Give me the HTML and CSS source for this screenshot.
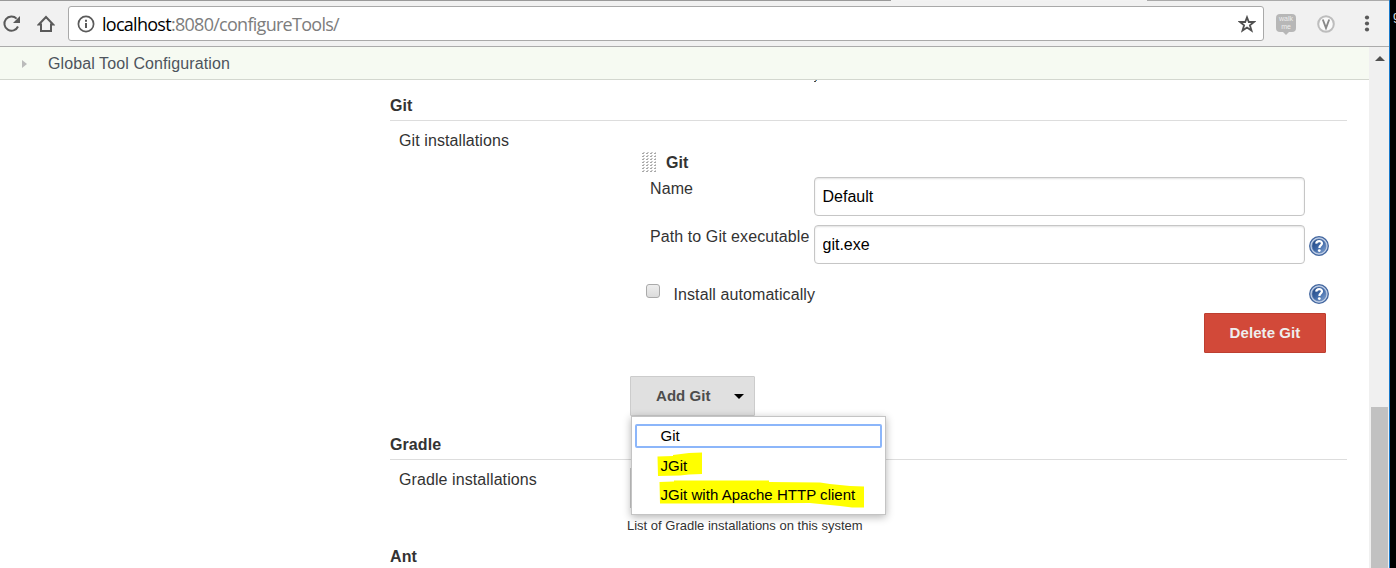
FILE: index.html
```html
<!DOCTYPE html>
<html lang="en">
<head>
<meta charset="utf-8">
<title>Global Tool Configuration</title>
<link rel="stylesheet" href="styles.css">
</head>
<body>
<div class="screen">
  <div class="window">
    <div class="tabstrip"><span class="tab-edge left"></span><span class="tab-edge right"></span></div>
    <header class="toolbar">
      <svg class="reload" width="20" height="20" viewBox="0 0 20 20"><path d="M15.600 4.600A7.100 7.100 0 1 0 17 12.500" fill="none" stroke="#5a5a5a" stroke-width="2"/><path d="M19 2v7h-7z" fill="#5a5a5a"/></svg>
      <svg class="home" width="18" height="18" viewBox="0 0 18 18"><path d="M1.800 9.500 9 2l7.200 7.500H14V16H4V9.500z" fill="none" stroke="#5a5a5a" stroke-width="2"/></svg>
      <div class="address">
        <svg class="info" width="18" height="18" viewBox="0 0 18 18"><circle cx="9" cy="9" r="7.600" fill="none" stroke="#5a5a5a" stroke-width="1.700"/><path d="M9 8v5M9 4.800v2" stroke="#5a5a5a" stroke-width="2"/></svg>
        <span class="url"><b>localhost</b>:8080/configureTools/</span>
        <svg class="star" width="18" height="18" viewBox="0 0 18 18"><path d="M9 2.300l1.800 4.700h5.200l-4.100 3.300 1.600 5.200L9 12.500l-4.500 3 1.600-5.200L2 7h5.200z" fill="none" stroke="#505050" stroke-width="1.800"/></svg>
      </div>
      <div class="walkme"><span>walk</span><span>me</span></div>
      <svg class="vee" width="18" height="18" viewBox="0 0 18 18"><circle cx="9" cy="9" r="7.800" fill="#fafafa" stroke="#bdbdbd" stroke-width="2"/><path d="M5.800 4.500 9 13l3.200-8.500" fill="none" stroke="#888" stroke-width="1.900"/></svg>
      <svg class="more" width="6" height="18" viewBox="0 0 6 18"><g fill="#5a5a5a"><circle cx="3" cy="2.500" r="2.100"/><circle cx="3" cy="8.500" r="2.100"/><circle cx="3" cy="14.500" r="2.100"/></g></svg>
    </header>
    <div class="viewport">
      <div class="page">
        <nav class="breadcrumb"><span class="crumb-arrow"></span><span class="crumb">Global Tool Configuration</span></nav>
        <svg class="clipped" width="4" height="2"><path d="M1 0h1v1H1z" fill="#c8a070"/><path d="M2 0h1v1H2z" fill="#3c8cc8"/><path d="M0 1h2v1H0z" fill="#444"/></svg>
        <main class="config">
          <h2>Git</h2>
          <section class="row git">
            <div class="label">Git installations</div>
            <div class="body">
              <div class="tool-title">
                <svg width="14" height="20"><defs><pattern id="grip" width="4" height="3" patternUnits="userSpaceOnUse"><path d="M0 1h2v1H0z" fill="#a8a8a8"/><path d="M1 0h2v1H1z" fill="#ccc"/></pattern></defs><rect width="14" height="20" fill="url(#grip)"/></svg>
                <b>Git</b>
              </div>
              <div class="field"><label>Name</label><input type="text" value="Default"></div>
              <div class="field"><label>Path to Git executable</label><input type="text" value="git.exe"><svg class="help" viewBox="0 0 20 20"><use href="#help"/></svg></div>
              <div class="auto"><span class="checkbox"></span><span class="auto-text">Install automatically</span><svg class="help" viewBox="0 0 20 20"><use href="#help"/></svg></div>
              <button class="delete">Delete Git</button>
              <div class="add">
                <button class="add-button">Add Git<span class="caret"></span></button>
                <div class="menu">
                  <svg class="marker" width="253" height="97"><path d="M25.500 39.500 41 39V38l16-2 13-.5V57l-13 .5-9 1-22 .5zM27.500 65 42 64.500V63.500l95 0v1.500l51 .5 10 1.500 20 2 14 .5V90.500l-12 0-12-1.500-30-3-120 .5-30 0z" fill="#ff0"/></svg>
                  <div class="item selected">Git</div>
                  <div class="item">JGit</div>
                  <div class="item last">JGit with Apache HTTP client</div>
                </div>
              </div>
            </div>
          </section>
          <h2>Gradle</h2>
          <section class="row gradle">
            <div class="label">Gradle installations</div>
            <div class="body"><div class="covered"></div><div class="note">List of Gradle installations on this system</div></div>
          </section>
          <h2>Ant</h2>
        </main>
      </div>
      <div class="scrollbar"><span class="up"></span><span class="thumb"></span></div>
    </div>
  </div>
  <aside class="behind"><span>g</span></aside>
</div>
<svg class="symbols" width="0" height="0">
  <linearGradient id="blue" x2="1" y2="1"><stop stop-color="#1d427e"/><stop offset=".5" stop-color="#3d67a6"/><stop offset="1" stop-color="#87a8d6"/></linearGradient>
  <symbol id="help" viewBox="0 0 20 20"><circle cx="10" cy="10" r="9.300" fill="#c3d1e8" stroke="#42669f" stroke-width="1.300"/><circle cx="10" cy="10" r="7" fill="url(#blue)" stroke="#5577aa" stroke-width=".6"/><path d="M7.200 7.600C7.400 4.300 13 4.200 13 7.300c0 2.200-2.600 2-2.600 4.600" fill="none" stroke="#fff" stroke-width="2.200"/><circle cx="10.300" cy="14.600" r="1.400" fill="#fff"/></symbol>
</svg>
</body>
</html>
```
FILE: styles.css
```css
* { box-sizing: border-box; }
body { margin: 0; overflow: hidden; font: 16px/20px "Liberation Sans", Arial, sans-serif; color: #333; }
svg { display: block; flex: none; }
.symbols { position: absolute; }
.screen { display: flex; width: 1396px; height: 568px; background: #000; }
.window { display: flex; flex-direction: column; width: 1390px; border-right: 1px solid #1979ca; background: #f0f0f0; }
.behind { width: 6px; overflow: hidden; color: #ddd; padding: 8px 0 0 3px; font-size: 13px; line-height: 16px; }
.tabstrip { display: flex; justify-content: space-between; height: 1px; background: #f2f2f2; }
.tab-edge.left { width: 891px; background: #999; }
.tab-edge.right { width: 242px; background: #aaa; }
.toolbar { display: flex; align-items: center; height: 46px; border-bottom: 1px solid #ababab; background: #f1f1f1; }
.reload { margin-left: 1px; }
.home { margin-left: 16px; }
.address { display: flex; align-items: center; width: 1196px; height: 35px; margin-left: 13px; padding: 0 7px 0 8px; border: 1px solid #a9a9a9; border-radius: 3px; background: #fff; }
.url { flex: 1; margin-left: 7px; font: 18px/24px "Open Sans", sans-serif; letter-spacing: -.72px; color: #7d7d7d; }
.url b { font-weight: normal; color: #000; }
.walkme { position: relative; display: flex; flex-direction: column; align-items: center; width: 20px; height: 18px; margin: -2px 0 0 12px; padding-top: 1px; border-radius: 4px; background: #b7b7b7; color: #eee; font: 7px/8px "Liberation Sans", sans-serif; }
.walkme::after { content: ""; position: absolute; top: 18px; left: 7px; border: 3px solid transparent; border-top-color: #b7b7b7; border-bottom: 0; }
.vee { margin-left: 21px; }
.more { margin-left: 29px; }
.viewport { display: flex; flex: 1; min-height: 0; }
.page { position: relative; width: 1369px; background: #fff; overflow: hidden; }
.breadcrumb { display: flex; align-items: center; height: 33px; padding-left: 22px; border-bottom: 1px solid #d3d7cf; background: #f6faf2; color: #4d545d; letter-spacing: .1px; }
.crumb { padding-top: 2px; }
.crumb-arrow { margin: 1px 21px 0 0; border: 4px solid transparent; border-left: 5px solid #bbb; border-right: 0; }
.clipped { position: absolute; left: 814px; top: 33px; }
.config { width: 957px; margin-left: 390px; padding-top: 10px; }
h2 { height: 31px; margin: 0; border-bottom: 1px solid #ddd; font-size: 16px; line-height: 31px; letter-spacing: .1px; }
.row { display: grid; grid-template-columns: 240px 717px; }
.git { height: 308px; }
.gradle { height: 81px; }
.label { padding: 10px 0 0 9px; letter-spacing: .09px; }
.tool-title { display: flex; gap: 10px; height: 56px; padding: 31px 0 0 12px; line-height: 22px; }
.field { display: flex; height: 48px; padding-left: 20px; }
.field label { width: 164px; padding-top: 2px; white-space: nowrap; letter-spacing: .09px; }
.field input { width: 491px; height: 39px; padding: 0 7.500px; border: 1px solid #c6c6c6; border-radius: 4px; box-shadow: inset 0 1px 2px #e2e2e2; font: 16px "Liberation Sans", Arial, sans-serif; color: #000; }
.help { width: 20px; height: 20px; margin: 11px 0 0 4px; }
.auto { display: flex; height: 40px; padding: 11px 18px 0 16px; }
.checkbox { width: 14px; height: 14px; border: 1px solid #aaa; border-radius: 3px; background: linear-gradient(#eee, #dcdcdc); }
.auto-text { margin: 0 auto 0 13.500px; line-height: 22px; letter-spacing: .09px; }
.auto .help { margin: 0; }
button { display: block; height: 40px; font: bold 15px "Liberation Sans", Arial, sans-serif; }
.delete { width: 122px; margin-left: 574px; padding: 0 0 2px; border: 1px solid #bd3f30; border-radius: 1px; background: #d24939; color: #eee; letter-spacing: .08px; }
.add { position: relative; margin-top: 23px; }
.add-button { display: flex; align-items: center; width: 125px; padding: 0 0 2px 25px; border: 1px solid #ccc; border-radius: 1px; background: #e0e0e0; color: #4d4d4d; letter-spacing: .05px; }
.caret { margin: 3px 0 0 23px; border: 5px solid transparent; border-top-color: #000; border-bottom: 0; }
.menu { position: absolute; z-index: 2; left: 1px; top: 40px; width: 255px; height: 99px; padding: 7px 3px; border: 1px solid #c4c4c4; background: #fff; box-shadow: 0 2px 8px rgba(0,0,0,.3); font-size: 15px; letter-spacing: .03px; color: #000; }
.marker { position: absolute; left: 0; top: 0; }
.item { position: relative; height: 25px; margin-bottom: 5px; padding-left: 24.500px; border: 1px solid transparent; line-height: 22px; white-space: nowrap; }
.item.last { margin-top: -1px; }
.item.selected { height: 24px; margin-bottom: 6px; border: 2px solid #8cb6fa; padding-left: 23.500px; line-height: 19px; border-radius: 2px; }
.covered { width: 125px; height: 40px; margin-top: 8px; border: 1px solid #ccc; background: #e0e0e0; }
.note { margin: 8px 0 0 -3px; font-size: 13px; }
.scrollbar { display: flex; flex-direction: column; width: 20px; padding: 9px 1px 0 2px; background: #f0f0f0; }
.up { align-self: center; border: 5px solid transparent; border-bottom-color: #505050; border-top: 0; }
.thumb { flex: 1; margin-top: 346px; background: #c1c1c1; }
```
